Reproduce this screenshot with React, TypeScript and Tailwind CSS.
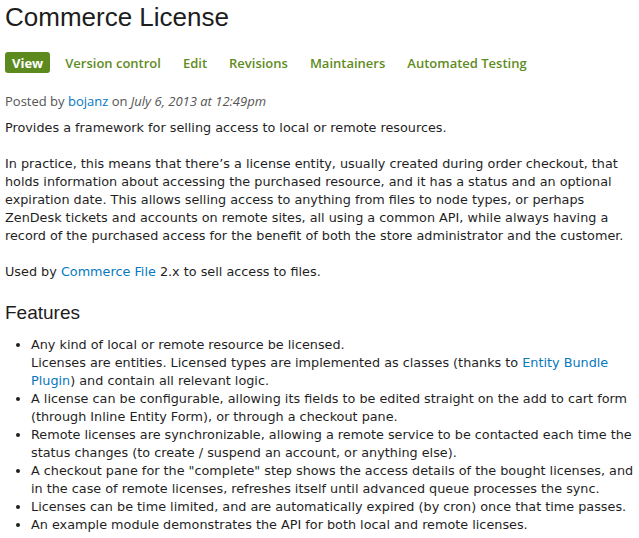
import React from "react";

const body = { fontFamily: '"DejaVu Sans", Verdana, sans-serif' };
const ui = { fontFamily: '"Open Sans", "Noto Sans", sans-serif' };
const head = { fontFamily: '"Liberation Sans", Arial, sans-serif' };

const tabs = ["Version control", "Edit", "Revisions", "Maintainers", "Automated Testing"];

function Link({ children }: { children: React.ReactNode }) {
  return <a className="text-[#0678be] no-underline">{children}</a>;
}

export default function App() {
  return (
    <div
      className="w-[639px] h-[538px] overflow-hidden bg-white pl-[5px] pr-[3px] text-[12.8px] leading-[18px] text-[#1f1f1f]"
      style={body}
    >
      <h1 className="text-[26px] leading-[34px] text-[#1d1d1d] font-normal" style={head}>
        Commerce License
      </h1>

      {/* tabs */}
      <div className="mt-[18px] flex items-center gap-[8px] text-[13px]" style={ui}>
        <span className="h-[21px] px-[7px] flex items-center rounded-[3px] bg-[#5c8a1e] text-white font-bold">
          View
        </span>
        {tabs.map((t) => (
          <span key={t} className="h-[21px] px-[7px] flex items-center text-[#5f8c1e] font-semibold">
            {t}
          </span>
        ))}
      </div>

      <div className="mt-[19px] text-[13px] text-[#555]" style={ui}>
        Posted by <Link>bojanz</Link> on <em>July 6, 2013 at 12:49pm</em>
      </div>

      <p className="mt-[9px]">Provides a framework for selling access to local or remote resources.</p>
      <p className="mt-[18px]">
        In practice, this means that there’s a license entity, usually created during order checkout, that
        holds information about accessing the purchased resource, and it has a status and an optional
        expiration date. This allows selling access to anything from files to node types, or perhaps
        ZenDesk tickets and accounts on remote sites, all using a common API, while always having a
        record of the purchased access for the benefit of both the store administrator and the customer.
      </p>
      <p className="mt-[18px]">
        Used by <Link>Commerce File</Link> 2.x to sell access to files.
      </p>

      <h2 className="mt-[20px] text-[19px] leading-[24px] font-normal text-[#1d1d1d]" style={head}>
        Features
      </h2>

      <ul className="mt-[11px] list-disc pl-[26px]">
        <li>
          Any kind of local or remote resource be licensed.
          <br />
          Licenses are entities. Licensed types are implemented as classes (thanks to{" "}
          <Link>Entity Bundle Plugin</Link>) and contain all relevant logic.
        </li>
        <li>
          A license can be configurable, allowing its fields to be edited straight on the add to cart form
          (through Inline Entity Form), or through a checkout pane.
        </li>
        <li>
          Remote licenses are synchronizable, allowing a remote service to be contacted each time the
          status changes (to create / suspend an account, or anything else).
        </li>
        <li>
          A checkout pane for the "complete" step shows the access details of the bought licenses, and
          in the case of remote licenses, refreshes itself until advanced queue processes the sync.
        </li>
        <li>Licenses can be time limited, and are automatically expired (by cron) once that time passes.</li>
        <li>An example module demonstrates the API for both local and remote licenses.</li>
      </ul>
    </div>
  );
}
